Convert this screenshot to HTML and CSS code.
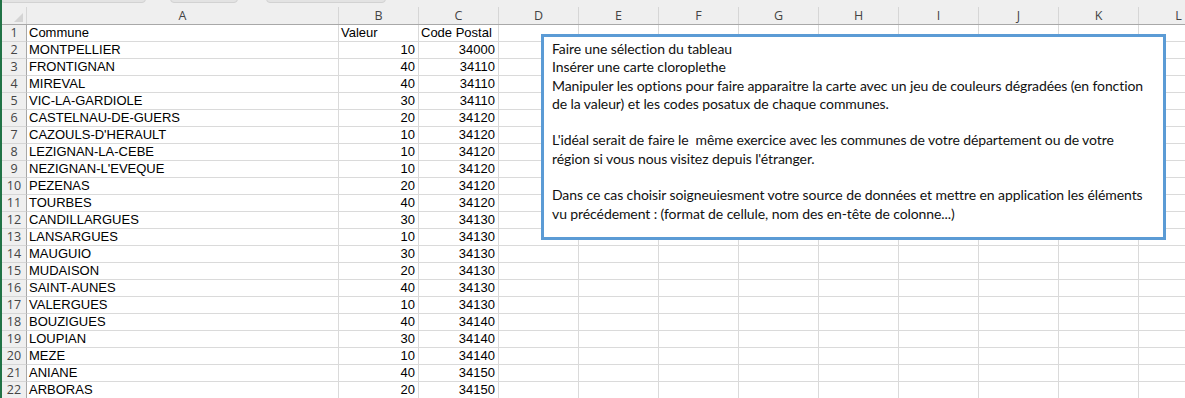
FILE: index.html
```html
<!DOCTYPE html>
<html lang="fr">
<head>
<meta charset="utf-8">
<title>Feuille</title>
<link rel="stylesheet" href="styles.css">
</head>
<body>
<div class="app">
  <div class="topstrip">
    <span class="pill p1"></span><span class="pill p2"></span><span class="pill p3"></span>
  </div>
  <div class="colheads">
    <div class="corner"><span class="tri"></span></div>
    <div class="ch cA">A</div><div class="ch cB">B</div><div class="ch cB">C</div>
    <div class="ch cB">D</div><div class="ch cB">E</div><div class="ch cB">F</div>
    <div class="ch cB">G</div><div class="ch cB">H</div><div class="ch cB">I</div>
    <div class="ch cB">J</div><div class="ch cB">K</div><div class="ch cB">L</div>
  </div>
  <div class="rows">
    <div class="row"><div class="rh">1</div><div class="c a">Commune</div><div class="c b">Valeur</div><div class="c b">Code Postal</div><div class="rest"></div></div>
    <div class="row"><div class="rh">2</div><div class="c a">MONTPELLIER</div><div class="c b n">10</div><div class="c b n">34000</div><div class="rest"></div></div>
    <div class="row"><div class="rh">3</div><div class="c a">FRONTIGNAN</div><div class="c b n">40</div><div class="c b n">34110</div><div class="rest"></div></div>
    <div class="row"><div class="rh">4</div><div class="c a">MIREVAL</div><div class="c b n">40</div><div class="c b n">34110</div><div class="rest"></div></div>
    <div class="row"><div class="rh">5</div><div class="c a">VIC-LA-GARDIOLE</div><div class="c b n">30</div><div class="c b n">34110</div><div class="rest"></div></div>
    <div class="row"><div class="rh">6</div><div class="c a">CASTELNAU-DE-GUERS</div><div class="c b n">20</div><div class="c b n">34120</div><div class="rest"></div></div>
    <div class="row"><div class="rh">7</div><div class="c a">CAZOULS-D'HERAULT</div><div class="c b n">10</div><div class="c b n">34120</div><div class="rest"></div></div>
    <div class="row"><div class="rh">8</div><div class="c a">LEZIGNAN-LA-CEBE</div><div class="c b n">10</div><div class="c b n">34120</div><div class="rest"></div></div>
    <div class="row"><div class="rh">9</div><div class="c a">NEZIGNAN-L'EVEQUE</div><div class="c b n">10</div><div class="c b n">34120</div><div class="rest"></div></div>
    <div class="row"><div class="rh">10</div><div class="c a">PEZENAS</div><div class="c b n">20</div><div class="c b n">34120</div><div class="rest"></div></div>
    <div class="row"><div class="rh">11</div><div class="c a">TOURBES</div><div class="c b n">40</div><div class="c b n">34120</div><div class="rest"></div></div>
    <div class="row"><div class="rh">12</div><div class="c a">CANDILLARGUES</div><div class="c b n">30</div><div class="c b n">34130</div><div class="rest"></div></div>
    <div class="row"><div class="rh">13</div><div class="c a">LANSARGUES</div><div class="c b n">10</div><div class="c b n">34130</div><div class="rest"></div></div>
    <div class="row"><div class="rh">14</div><div class="c a">MAUGUIO</div><div class="c b n">30</div><div class="c b n">34130</div><div class="rest"></div></div>
    <div class="row"><div class="rh">15</div><div class="c a">MUDAISON</div><div class="c b n">20</div><div class="c b n">34130</div><div class="rest"></div></div>
    <div class="row"><div class="rh">16</div><div class="c a">SAINT-AUNES</div><div class="c b n">40</div><div class="c b n">34130</div><div class="rest"></div></div>
    <div class="row"><div class="rh">17</div><div class="c a">VALERGUES</div><div class="c b n">10</div><div class="c b n">34130</div><div class="rest"></div></div>
    <div class="row"><div class="rh">18</div><div class="c a">BOUZIGUES</div><div class="c b n">40</div><div class="c b n">34140</div><div class="rest"></div></div>
    <div class="row"><div class="rh">19</div><div class="c a">LOUPIAN</div><div class="c b n">30</div><div class="c b n">34140</div><div class="rest"></div></div>
    <div class="row"><div class="rh">20</div><div class="c a">MEZE</div><div class="c b n">10</div><div class="c b n">34140</div><div class="rest"></div></div>
    <div class="row"><div class="rh">21</div><div class="c a">ANIANE</div><div class="c b n">40</div><div class="c b n">34150</div><div class="rest"></div></div>
    <div class="row"><div class="rh">22</div><div class="c a">ARBORAS</div><div class="c b n">20</div><div class="c b n">34150</div><div class="rest"></div></div>
  </div>
  <div class="textbox">
    <div class="tl">Faire une sélection du tableau</div>
    <div class="tl">Insérer une carte cloroplethe</div>
    <div class="tl">Manipuler les options pour faire apparaitre la carte avec un jeu de couleurs dégradées (en fonction</div>
    <div class="tl">de la valeur) et les codes posatux de chaque communes.</div>
    <div class="tl">&nbsp;</div>
    <div class="tl">L'idéal serait de faire le &nbsp;même exercice avec les communes de votre département ou de votre</div>
    <div class="tl">région si vous nous visitez depuis l'étranger.</div>
    <div class="tl">&nbsp;</div>
    <div class="tl">Dans ce cas choisir soigneuiesment votre source de données et mettre en application les éléments</div>
    <div class="tl">vu précédement : (format de cellule, nom des en-tête de colonne...)</div>
  </div>
</div>
</body>
</html>
```

FILE: styles.css
```css
* { box-sizing: border-box; }
html, body { margin: 0; padding: 0; background: #ffffff; }
body { width: 1185px; height: 398px; overflow: hidden; }

.app {
  position: relative;
  width: 1185px;
  height: 398px;
  overflow: hidden;
  border-left: 2px solid #217346;
  background: #ffffff;
}

.topstrip {
  height: 7px;
  background: #efefef;
  display: flex;
  gap: 24px;
  position: relative;
  overflow: hidden;
}
.pill {
  display: block;
  height: 10px;
  margin-top: -7px;
  border-radius: 4px;
  background: #e3e3e3;
  border: 1px solid #d2d2d2;
}
.p1 { width: 146px; margin-left: -2px; }
.p2 { width: 68px; }
.p3 { width: 120px; margin-left: 4px; }

.colheads {
  display: flex;
  height: 18px;
  background: #efefef;
  border-bottom: 1px solid #a8a8a8;
  font-family: "Open Sans", "Noto Sans", sans-serif;
  font-size: 12.5px;
  color: #444444;
}
.corner {
  flex: 0 0 25px;
  border-right: 1px solid #d6d6d6;
  position: relative;
}
.tri {
  position: absolute;
  right: 3px;
  bottom: 2px;
  width: 0;
  height: 0;
  border-left: 9px solid transparent;
  border-bottom: 9px solid #d4d4d4;
}
.ch {
  border-right: 1px solid #d6d6d6;
  display: flex;
  align-items: center;
  justify-content: center;
  line-height: 17px;
  flex: 0 0 80px;
}
.ch.cA { flex: 0 0 312px; }

.rows {
  font-family: "Liberation Sans", Arial, sans-serif;
  font-size: 13px;
  color: #000000;
}
.row {
  display: flex;
  height: 17px;
  border-bottom: 1px solid #dadada;
}
.rh {
  flex: 0 0 25px;
  background: #efefef;
  border-right: 1px solid #a8a8a8;
  margin-bottom: -1px;
  border-bottom: 1px solid #d6d6d6;
  text-align: center;
  font-family: "Open Sans", "Noto Sans", sans-serif;
  font-size: 12.5px;
  color: #444444;
  line-height: 16px;
}
.c {
  border-right: 1px solid #dadada;
  line-height: 16px;
  padding: 0 3px 0 2px;
  white-space: nowrap;
  overflow: hidden;
}
.c.a { flex: 0 0 312px; }
.c.b { flex: 0 0 80px; }
.c.n { text-align: right; }
.rest {
  flex: 1 0 700px;
  background: repeating-linear-gradient(to right, transparent 0 79px, #dadada 79px 80px);
}

.textbox {
  position: absolute;
  left: 539px;
  top: 34px;
  width: 625px;
  height: 206px;
  border: 3px solid #5b9bd5;
  background: #ffffff;
  padding: 3px 0 0 8px;
  font-family: Lato, "Open Sans", sans-serif;
  font-size: 14px;
  letter-spacing: -0.09px;
  color: #111111;
}
.tl {
  height: 18.3px;
  line-height: 18.3px;
  white-space: nowrap;
}
```
